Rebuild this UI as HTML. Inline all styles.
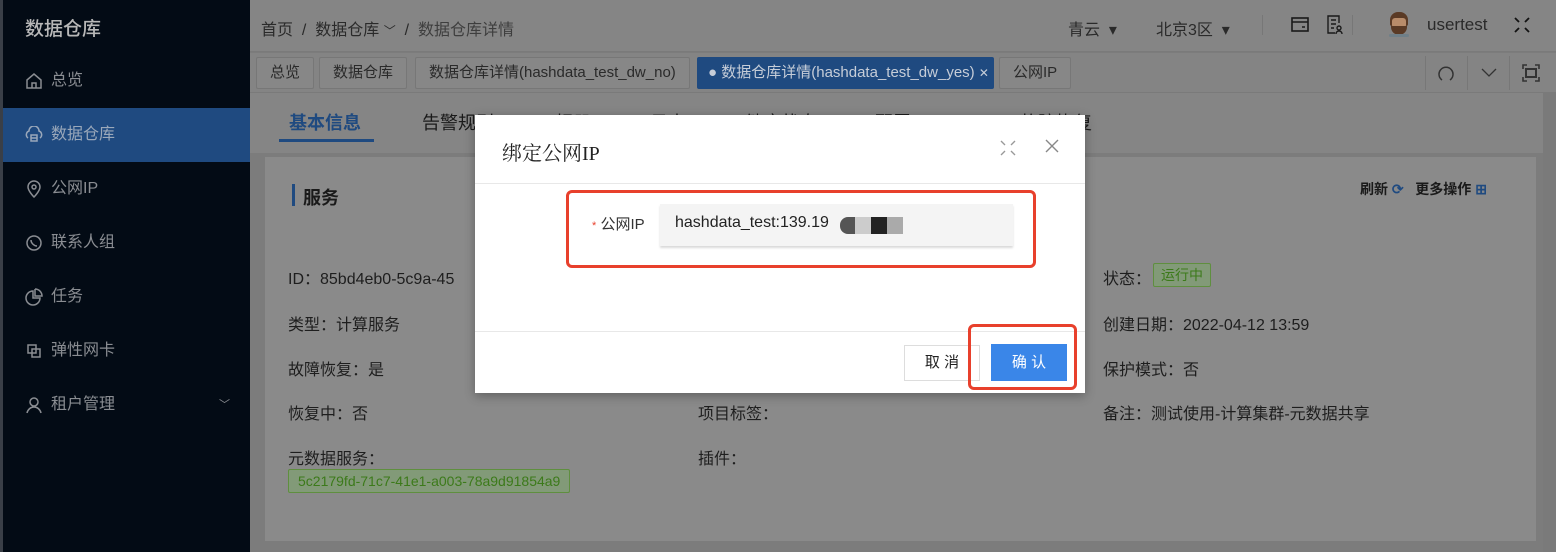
<!DOCTYPE html>
<html><head><meta charset="utf-8"><style>
*{margin:0;padding:0;box-sizing:border-box}
body{width:1556px;height:552px;overflow:hidden;font-family:"Liberation Sans","Noto Sans CJK SC",sans-serif;background:#7c7c7c;position:relative;color:#1a1a1a}
.abs{position:absolute}
.sb{left:0;top:0;width:250px;height:552px;background:#030b15;border-left:3px solid #3a3f47}
.sb .t{position:absolute;left:22px;top:14px;font-size:19px;color:#b8b8b8;font-weight:500}
.mi{position:absolute;left:0;width:247px;height:54px;color:#8a8d92;font-size:16px;line-height:54px;padding-left:48px}
.mi svg{position:absolute;left:22px;top:18px}
.act{background:#1f4a80;color:#9aa8ba}
.hd{left:250px;top:0;width:1306px;height:52px;background:#858585;border-bottom:1px solid #7a7a7a;font-size:16px;color:#2a2a2a}
.tb{left:250px;top:53px;width:1306px;height:40px;background:#848484;border-bottom:1px solid #7a7a7a}
.tag{position:absolute;top:4px;height:32px;border:1px solid #777;background:#878787;font-size:15px;line-height:30px;padding:0 13px;color:#2a2a2a;border-radius:2px}
.ct{left:250px;top:93px;width:1306px;height:60px;background:#858585}
.card{left:265px;top:157px;width:1271px;height:384px;background:#8a8a8a}
.lb{position:absolute;font-size:16px;color:#1e1e1e}
.gr{position:absolute;border:1px solid #5f8f3f;background:#829a78;color:#3c7a1a;font-size:14px;border-radius:2px;padding:0 9px;line-height:22px}
.modal{left:475px;top:115px;width:610px;height:278px;background:#fff;box-shadow:0 3px 10px rgba(0,0,0,.3)}
</style></head><body>
<div class="abs sb">
<div class="t">数据仓库</div>
<div class="mi" style="top:54px"><svg width="18" height="18" viewBox="0 0 18 18" fill="none" stroke="#8a8d92" stroke-width="1.5"><path d="M2 8L9 2l7 6v8H2z M7 16v-5h4v5"/></svg>总览</div>
<div class="mi act" style="top:108px"><svg width="18" height="18" viewBox="0 0 18 18" fill="none" stroke="#9aa8ba" stroke-width="1.5"><path d="M3 12a4 4 0 0 1 1-7 5 5 0 0 1 10 0 4 4 0 0 1 1 7M6 9h6v6H6zM6 12h6"/></svg>数据仓库</div>
<div class="mi" style="top:162px"><svg width="18" height="18" viewBox="0 0 18 18" fill="none" stroke="#8a8d92" stroke-width="1.5"><path d="M9 17s-6-6-6-10a6 6 0 0 1 12 0c0 4-6 10-6 10z"/><circle cx="9" cy="7" r="2"/></svg>公网IP</div>
<div class="mi" style="top:216px"><svg width="18" height="18" viewBox="0 0 18 18" fill="none" stroke="#8a8d92" stroke-width="1.5"><circle cx="9" cy="9" r="7"/><path d="M6 6c0 3 3 6 6 6"/></svg>联系人组</div>
<div class="mi" style="top:270px"><svg width="18" height="18" viewBox="0 0 18 18" fill="none" stroke="#8a8d92" stroke-width="1.5"><path d="M8 3a7 7 0 1 0 7 7H8z M10 1v7h7a7 7 0 0 0-7-7"/></svg>任务</div>
<div class="mi" style="top:324px"><svg width="18" height="18" viewBox="0 0 18 18" fill="none" stroke="#8a8d92" stroke-width="1.5"><path d="M3 3h8v8H3z M7 7h8v8H7z"/></svg>弹性网卡</div>
<div class="mi" style="top:378px"><svg width="18" height="18" viewBox="0 0 18 18" fill="none" stroke="#8a8d92" stroke-width="1.5"><circle cx="9" cy="6" r="4"/><path d="M2 17c1-4 4-6 7-6s6 2 7 6"/></svg>租户管理<span style="position:absolute;left:216px;top:0;font-size:11px">﹀</span></div>
</div>
<div class="abs hd">
<span class="abs" style="left:11px;top:16px">首页 &nbsp;/ &nbsp;数据仓库 <span style="font-size:12px">﹀</span> &nbsp;/ &nbsp;<span style="color:#3e3e3e">数据仓库详情</span></span>
<span class="abs" style="left:818px;top:16px">青云 &nbsp;▾</span>
<span class="abs" style="left:906px;top:16px">北京3区 &nbsp;▾</span>
<div class="abs" style="left:1012px;top:15px;width:1px;height:20px;background:#777"></div>
<svg class="abs" style="left:1041px;top:17px" width="18" height="16" viewBox="0 0 18 16" fill="none" stroke="#1a1a1a" stroke-width="1.6"><rect x="1" y="1" width="16" height="13"/><path d="M1 5h16M11 10h3"/></svg>
<svg class="abs" style="left:1077px;top:15px" width="16" height="20" viewBox="0 0 16 20" fill="none" stroke="#1a1a1a" stroke-width="1.4"><path d="M12 8V1H1v17h7M4 5h5M4 9h5M4 13h3"/><circle cx="12" cy="13" r="2"/><path d="M9 19c0-2 1.5-3 3-3s3 1 3 3"/></svg>
<div class="abs" style="left:1102px;top:15px;width:1px;height:20px;background:#777"></div>
<div class="abs" style="left:1140px;top:12px;width:18px;height:14px;border-radius:8px 8px 2px 2px;background:#5a3a25"></div>
<div class="abs" style="left:1142px;top:18px;width:14px;height:10px;border-radius:3px;background:#b88c6a"></div>
<div class="abs" style="left:1141px;top:26px;width:16px;height:9px;border-radius:0 0 8px 8px;background:#5a3a25"></div>
<div class="abs" style="left:1139px;top:34px;width:20px;height:3px;border-radius:2px;background:#6f7f88"></div>
<span class="abs" style="left:1177px;top:15px;font-size:17px">usertest</span>
<svg class="abs" style="left:1264px;top:17px" width="16" height="16" viewBox="0 0 16 16" fill="none" stroke="#111" stroke-width="1.8"><path d="M1 1l4 4M15 1l-4 4M1 15l4-4M15 15l-4-4"/></svg>
</div>
<div class="abs tb">
<div class="tag" style="left:6px">总览</div>
<div class="tag" style="left:69px">数据仓库</div>
<div class="tag" style="left:165px">数据仓库详情(hashdata_test_dw_no)</div>
<div class="tag" style="left:447px;width:297px;padding:0 10px;white-space:nowrap;background:#1f4a80;border-color:#1f4a80;color:#c6cdd8">● 数据仓库详情(hashdata_test_dw_yes) <span style="font-size:12px">✕</span></div>
<div class="tag" style="left:749px">公网IP</div>
<div class="abs" style="left:1175px;top:3px;width:1px;height:34px;background:#777"></div>
<div class="abs" style="left:1217px;top:3px;width:1px;height:34px;background:#777"></div>
<div class="abs" style="left:1259px;top:3px;width:1px;height:34px;background:#777"></div>
<svg class="abs" style="left:1188px;top:13px" width="16" height="16" viewBox="0 0 16 16" fill="none" stroke="#333" stroke-width="1.5"><path d="M4 14A7 7 0 1 1 12 14"/></svg>
<svg class="abs" style="left:1231px;top:15px" width="16" height="10" viewBox="0 0 16 10" fill="none" stroke="#333" stroke-width="1.3"><path d="M1 1l7 7 7-7"/></svg>
<svg class="abs" style="left:1272px;top:11px" width="18" height="18" viewBox="0 0 18 18" fill="none" stroke="#333" stroke-width="1.6"><path d="M1 5V1h4M13 1h4v4M17 13v4h-4M5 17H1v-4"/><rect x="4" y="5" width="10" height="8" stroke-width="2"/></svg>
</div>
<div class="abs ct">
<span class="abs" style="left:39px;top:16px;font-size:18px;color:#1f4a80;font-weight:600">基本信息</span>
<div class="abs" style="left:29px;top:46px;width:95px;height:3px;background:#1f4a80"></div>
<span class="abs" style="left:172px;top:16px;font-size:18px">告警规则</span>
<span class="abs" style="left:305px;top:16px;font-size:18px">相册</span>
<span class="abs" style="left:400px;top:16px;font-size:18px">日志</span>
<span class="abs" style="left:495px;top:16px;font-size:18px">健康状态</span>
<span class="abs" style="left:625px;top:16px;font-size:18px">配置HDFS</span>
<span class="abs" style="left:770px;top:16px;font-size:18px">故障恢复</span>
</div>
<div class="abs" style="left:1543px;top:93px;width:13px;height:459px;background:#7a7a7a"></div>
<div class="abs card">
<div class="abs" style="left:27px;top:27px;width:3px;height:22px;background:#1f4a80"></div>
<span class="abs" style="left:38px;top:27px;font-size:18px;font-weight:600">服务</span>
<span class="abs" style="left:1095px;top:22px;font-size:14px;font-weight:600">刷新 <span style="color:#1f4a80">⟳</span> &nbsp; 更多操作 <span style="color:#1f4a80">⊞</span></span>
</div>
<div class="lb" style="left:288px;top:265px">ID：85bd4eb0-5c9a-45</div>
<div class="lb" style="left:288px;top:311px">类型：计算服务</div>
<div class="lb" style="left:288px;top:356px">故障恢复：是</div>
<div class="lb" style="left:288px;top:400px">恢复中：否</div>
<div class="lb" style="left:288px;top:445px">元数据服务：</div>
<div class="gr" style="left:288px;top:469px">5c2179fd-71c7-41e1-a003-78a9d91854a9</div>
<div class="lb" style="left:698px;top:400px">项目标签：</div>
<div class="lb" style="left:698px;top:445px">插件：</div>
<div class="lb" style="left:1103px;top:265px">状态：</div>
<div class="gr" style="left:1153px;top:263px;padding:0 7px">运行中</div>
<div class="lb" style="left:1103px;top:311px">创建日期：2022-04-12 13:59</div>
<div class="lb" style="left:1103px;top:356px">保护模式：否</div>
<div class="lb" style="left:1103px;top:400px">备注：测试使用-计算集群-元数据共享</div>
<div class="abs modal">
<span class="abs" style="left:27px;top:22px;font-size:20px;font-family:'Liberation Serif','Noto Serif CJK SC',serif;color:#222">绑定公网IP</span>
<svg class="abs" style="left:525px;top:25px" width="16" height="16" viewBox="0 0 16 16" fill="none" stroke="#999" stroke-width="1.4"><path d="M1 1l4 4M15 1l-4 4M1 15l4-4M15 15l-4-4"/></svg>
<svg class="abs" style="left:570px;top:24px" width="14" height="14" viewBox="0 0 14 14" fill="none" stroke="#888" stroke-width="1.4"><path d="M1 1l12 12M13 1L1 13"/></svg>
<div class="abs" style="left:0;top:68px;width:610px;height:1px;background:#e8e8e8"></div>
<div class="abs" style="left:91px;top:75px;width:470px;height:78px;border:3px solid #e8402c;border-radius:6px"></div>
<span class="abs" style="left:117px;top:98px;font-size:15px;color:#333"><span style="color:#e8402c;font-size:11px">*</span> 公网IP</span>
<div class="abs" style="left:185px;top:89px;width:353px;height:42px;background:#f4f4f4;box-shadow:0 2px 2px rgba(0,0,0,.15)"></div>
<span class="abs" style="left:200px;top:99px;font-size:16px;color:#222">hashdata_test:139.19</span>
<div class="abs" style="left:365px;top:102px;width:15px;height:17px;background:#555;border-radius:8px 0 0 8px"></div>
<div class="abs" style="left:380px;top:102px;width:16px;height:17px;background:#ccc"></div>
<div class="abs" style="left:396px;top:102px;width:16px;height:17px;background:#222"></div>
<div class="abs" style="left:412px;top:102px;width:16px;height:17px;background:#aaa"></div>
<div class="abs" style="left:0;top:216px;width:610px;height:1px;background:#e8e8e8"></div>
<div class="abs" style="left:429px;top:230px;width:76px;height:36px;border:1px solid #ddd;font-size:15px;line-height:34px;text-align:center;color:#222">取 消</div>
<div class="abs" style="left:516px;top:229px;width:76px;height:37px;background:#3a86e8;font-size:15px;line-height:37px;text-align:center;color:#fff">确 认</div>
<div class="abs" style="left:493px;top:209px;width:109px;height:66px;border:3px solid #e8402c;border-radius:6px"></div>
</div>
</body></html>
